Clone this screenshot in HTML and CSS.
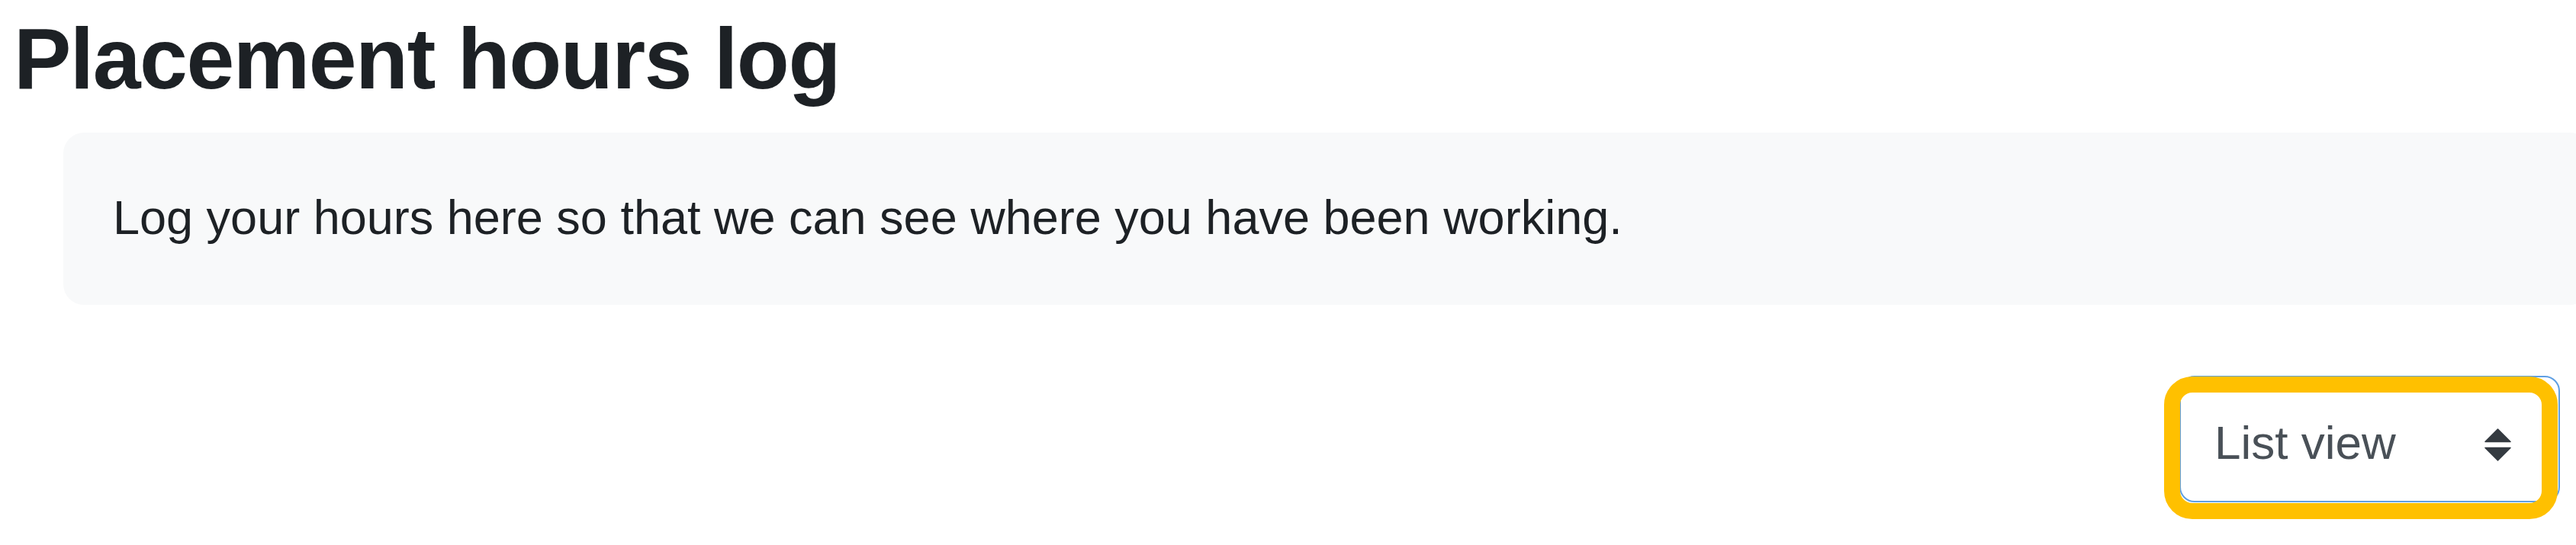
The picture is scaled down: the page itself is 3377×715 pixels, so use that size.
FILE: index.html
```html
<!DOCTYPE html>
<html lang="en">
<head>
<meta charset="utf-8">
<title>Placement hours log</title>
<link rel="stylesheet" href="styles.css">
</head>
<body>
<main class="page">
  <h2 class="page-title">Placement hours log</h2>
  <div class="intro-box">
    <p class="intro-text">Log your hours here so that we can see where you have been working.</p>
  </div>
  <div class="view-row">
    <div class="view-select" role="combobox" aria-label="View">
      <span class="view-select-label">List view</span>
      <svg class="view-select-arrows" width="35" height="43" viewBox="0 0 35 43" aria-hidden="true">
        <path d="M17.5 1 L34 17.5 L1 17.5 Z" fill="#343a40" stroke="#343a40" stroke-width="1.5" stroke-linejoin="round"/>
        <path d="M1 25.5 L34 25.5 L17.5 42 Z" fill="#343a40" stroke="#343a40" stroke-width="1.5" stroke-linejoin="round"/>
      </svg>
      <span class="highlight-ring" aria-hidden="true"></span>
    </div>
  </div>
</main>
</body>
</html>
```

FILE: styles.css
```css
html, body {
  margin: 0;
  padding: 0;
  background: #ffffff;
  min-height: 100vh;
}

body {
  font-family: "Liberation Sans", Arial, Helvetica, sans-serif;
  color: #1d2125;
}

.page {
  box-sizing: border-box;
  min-height: 100vh;
  overflow: hidden;
  padding: 10px 21px 0 18px;
  display: flex;
  flex-direction: column;
}

.page-title {
  margin: 0;
  font-size: 113px;
  line-height: 134px;
  font-weight: 700;
  letter-spacing: -1.5px;
  color: #1d2125;
}

.intro-box {
  margin: 30px -40px 0 65px;
  padding: 65px 65px 68px 65px;
  background: #f8f9fa;
  border-radius: 27px;
}

.intro-text {
  margin: 0;
  font-size: 63px;
  line-height: 93px;
  color: #1d2125;
}

.view-row {
  display: flex;
  justify-content: flex-end;
  margin-top: 93px;
}

.view-select {
  position: relative;
  box-sizing: border-box;
  width: 499px;
  height: 166px;
  padding: 39px 62px 30px 44px;
  display: flex;
  align-items: center;
  background: #ffffff;
  border: 2px solid #5f9fe3;
  border-radius: 20px;
}

.view-select-label {
  font-size: 62px;
  line-height: 93px;
  color: #495057;
}

.view-select-arrows {
  margin-left: auto;
  margin-top: 6px;
  display: block;
}

.highlight-ring {
  position: absolute;
  left: -22px;
  top: -1px;
  width: 516px;
  height: 187px;
  box-sizing: border-box;
  border: 21px solid #ffc000;
  border-radius: 37px;
  pointer-events: none;
}
```
